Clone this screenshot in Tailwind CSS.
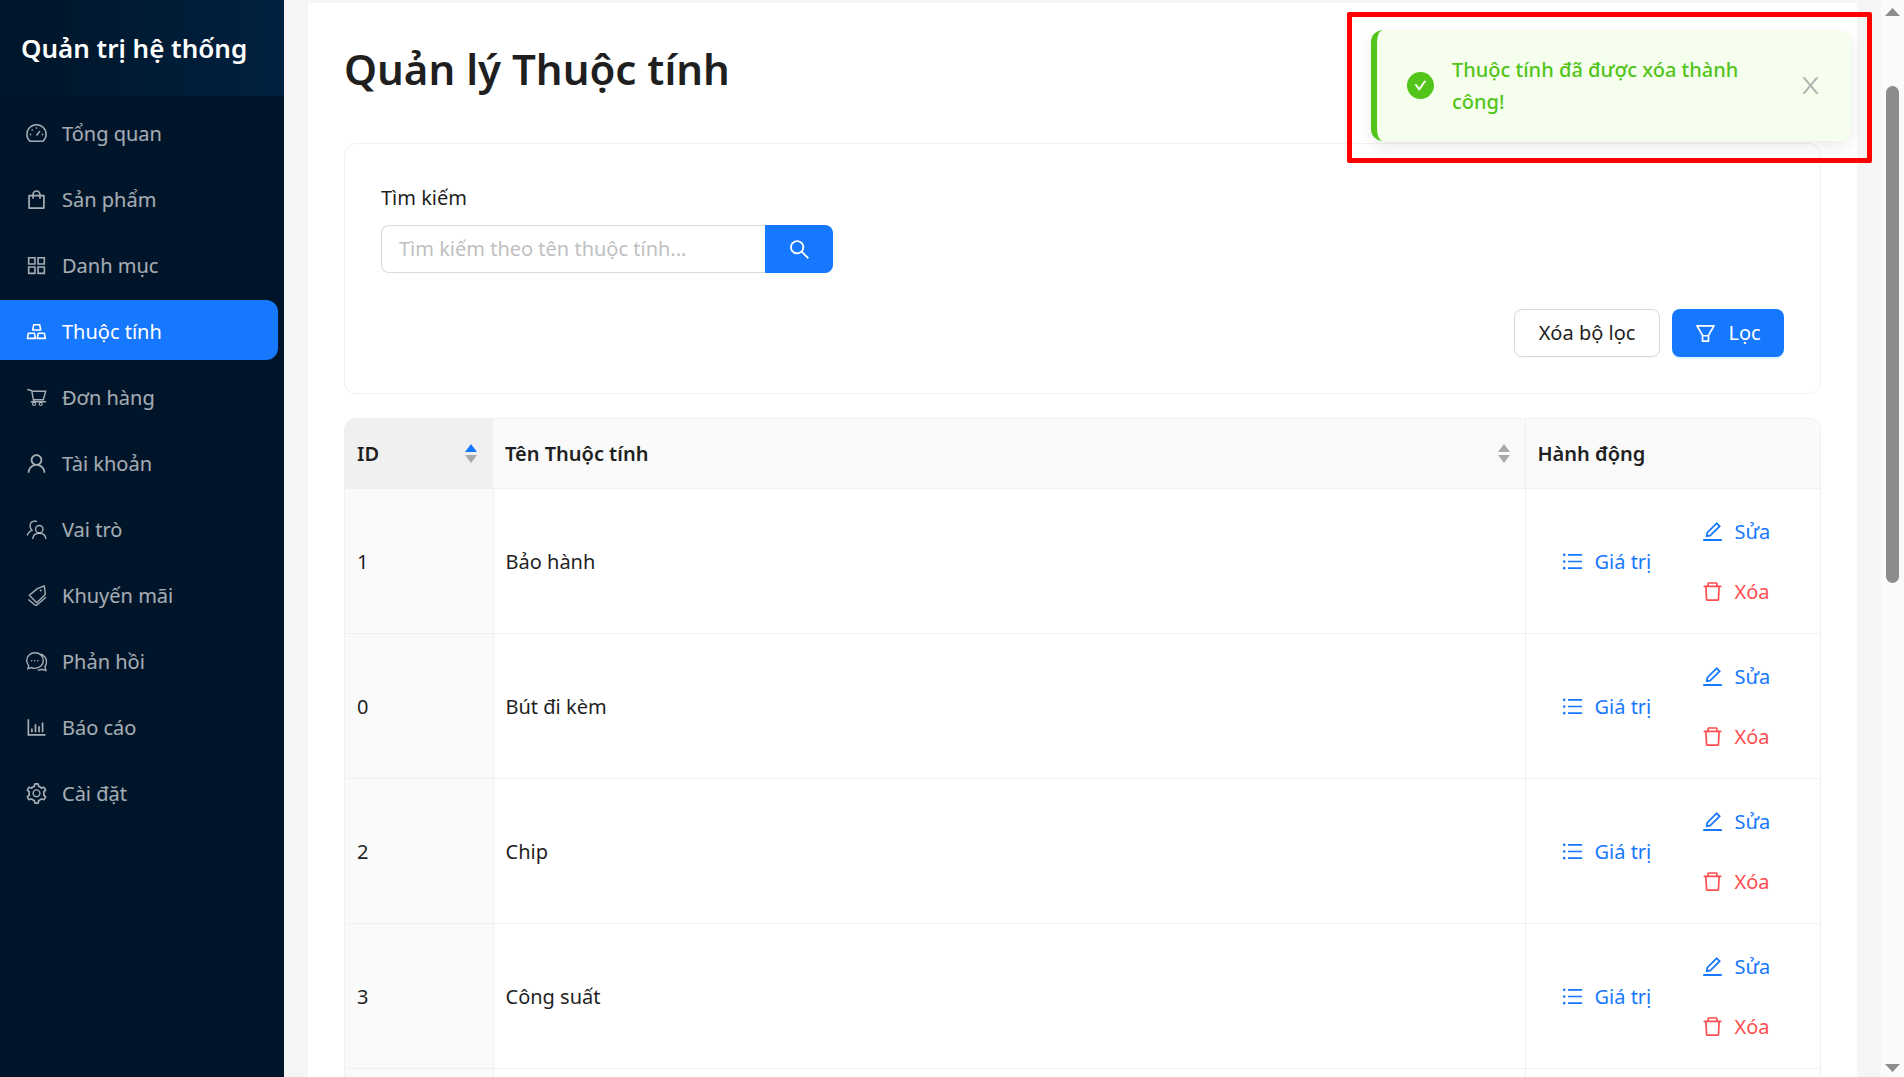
<!DOCTYPE html>
<html lang="en">
  <head>
    <meta charset="UTF-8" />
    <meta name="viewport" content="width=device-width, initial-scale=1.0" />
    <title>Quản lý Thuộc tính</title>
    <script src="https://cdn.jsdelivr.net/npm/@tailwindcss/browser@4"></script>
  </head>
  <body class="font-['Noto_Sans',sans-serif] text-[20px] text-[#1f1f1f] overflow-hidden">
    <svg class="hidden">
      <symbol id="i-dash" viewBox="0 0 21 21"><path d="M4 18.300a9.600 9.600 0 1 1 13 0z" fill="none" stroke="currentColor" stroke-width="1.500" stroke-linejoin="round"/><path d="M10.500 12.500l3.500-4.500M3.800 11.500h1.500M15.700 11.500h1.500M10.500 4.200v1.500M5.700 6.400l1 1" fill="none" stroke="currentColor" stroke-width="1.400"/></symbol>
      <symbol id="i-bag" viewBox="64 64 896 896"><path fill="currentColor" d="M832 312H696v-16c0-101.6-82.4-184-184-184s-184 82.4-184 184v16H192c-17.7 0-32 14.3-32 32v536c0 17.7 14.3 32 32 32h640c17.7 0 32-14.3 32-32V344c0-17.7-14.3-32-32-32zm-432-16c0-61.9 50.1-112 112-112s112 50.1 112 112v16H400v-16zm392 544H232V384h96v88c0 4.4 3.6 8 8 8h56c4.4 0 8-3.6 8-8v-88h224v88c0 4.4 3.6 8 8 8h56c4.4 0 8-3.6 8-8v-88h96v456z"/></symbol>
      <symbol id="i-app" viewBox="64 64 896 896"><path fill="currentColor" d="M464 144H160c-8.8 0-16 7.2-16 16v304c0 8.8 7.2 16 16 16h304c8.8 0 16-7.2 16-16V160c0-8.8-7.2-16-16-16zm-52 268H212V212h200v200zm452-268H560c-8.8 0-16 7.2-16 16v304c0 8.8 7.2 16 16 16h304c8.8 0 16-7.2 16-16V160c0-8.8-7.2-16-16-16zm-52 268H612V212h200v200zM464 544H160c-8.8 0-16 7.2-16 16v304c0 8.8 7.2 16 16 16h304c8.8 0 16-7.2 16-16V560c0-8.8-7.2-16-16-16zm-52 268H212V612h200v200zm452-268H560c-8.8 0-16 7.2-16 16v304c0 8.8 7.2 16 16 16h304c8.8 0 16-7.2 16-16V560c0-8.8-7.2-16-16-16zm-52 268H612V612h200v200z"/></symbol>
      <symbol id="i-gold" viewBox="0 0 21 21"><path d="M7.700 3.800h6l1 5.200h-8zM2.400 12.200h6l1 5.200h-8zM12.300 12.200h6l1 5.200h-8z" fill="none" stroke="currentColor" stroke-width="1.600" stroke-linejoin="round"/></symbol>
      <symbol id="i-cart" viewBox="0 0 21 21"><path d="M1.300 2.500l4.400 1 2.100 11.300M6 4.200h13.700l-2.400 8.600H6.800M4.700 14.800H20" fill="none" stroke="currentColor" stroke-width="1.400"/><circle cx="8" cy="17" r="1.500" fill="none" stroke="currentColor" stroke-width="1.200"/><circle cx="14.700" cy="17" r="1.500" fill="none" stroke="currentColor" stroke-width="1.200"/></symbol>
      <symbol id="i-user" viewBox="64 64 896 896"><path fill="currentColor" d="M858.5 763.6a374 374 0 00-80.6-119.5 375.63 375.63 0 00-119.5-80.6c-.4-.2-.8-.3-1.2-.5C719.5 518 760 444.7 760 362c0-137-111-248-248-248S264 225 264 362c0 82.7 40.5 156 102.8 201.1-.4.2-.8.3-1.2.5-44.8 18.9-85 46-119.5 80.6a375.63 375.63 0 00-80.6 119.5A371.7 371.7 0 00136 901.8a8 8 0 008 8.2h60c4.4 0 7.9-3.5 8-7.8 2-77.2 33-149.5 87.8-204.3 56.7-56.7 132-87.9 212.2-87.9s155.5 31.2 212.2 87.9C779 752.7 810 825 812 902.2c.1 4.4 3.6 7.8 8 7.8h60a8 8 0 008-8.2c-1-47.8-10.9-94.3-29.5-138.2zM512 534c-45.9 0-89.1-17.9-121.6-50.4S340 407.9 340 362c0-45.9 17.9-89.1 50.4-121.6S466.1 190 512 190s89.1 17.9 121.6 50.4S684 316.1 684 362c0 45.9-17.9 89.1-50.4 121.6S557.9 534 512 534z"/></symbol>
      <symbol id="i-team" viewBox="0 0 21 21"><circle cx="13.300" cy="10.200" r="3.700" fill="none" stroke="currentColor" stroke-width="1.400"/><path d="M6.700 20c.3-3.800 3-5.800 6.600-5.800s6.300 2 6.700 5.800M10.900 2.800C9.800 1.800 6.700 1.600 5 3.700c-1.600 2.100-1 5.600.900 7.600C3.300 12.400 1.700 14.300 1.300 16.500" fill="none" stroke="currentColor" stroke-width="1.400"/></symbol>
      <symbol id="i-tags" viewBox="0 0 21 21"><path d="M11.300 3.600l7-2.800 1 8.700-8.600 8.300-7.400-7.600z" fill="none" stroke="currentColor" stroke-width="1.400" stroke-linejoin="round"/><path d="M2.300 14.500l7.700 6.300 10-8.600" fill="none" stroke="currentColor" stroke-width="1.400"/><circle cx="14.700" cy="5.500" r="1" fill="currentColor"/></symbol>
      <symbol id="i-chat" viewBox="0 0 21 21"><path d="M9 1.700C4.300 1.700.700 5.200.700 9.500c0 2 .8 3.700 2 5.100l-.8 3.100 3.700-1.100c1 .5 2.200.8 3.400.8 4.700 0 8.300-3.500 8.300-7.900S13.700 1.700 9 1.700z" fill="none" stroke="currentColor" stroke-width="1.400"/><path d="M14.700 2.800c3.700 1.700 6 5 5.800 8.500-.1 1.800-.7 3.200-1.600 4.200l1 4-4.300-1.200c-1.200.6-2.800.8-3.800.5" fill="none" stroke="currentColor" stroke-width="1.400"/><circle cx="5.700" cy="9.800" r=".8" fill="currentColor"/><circle cx="8.700" cy="9.800" r=".8" fill="currentColor"/><circle cx="11.700" cy="9.800" r=".8" fill="currentColor"/></symbol>
      <symbol id="i-bar" viewBox="64 64 896 896"><path fill="currentColor" d="M888 792H200V168c0-4.400-3.600-8-8-8h-56c-4.400 0-8 3.600-8 8v688c0 4.400 3.600 8 8 8h752c4.400 0 8-3.600 8-8v-56c0-4.400-3.600-8-8-8zm-600-80h56c4.400 0 8-3.600 8-8V560c0-4.400-3.600-8-8-8h-56c-4.400 0-8 3.600-8 8v144c0 4.400 3.600 8 8 8zm152 0h56c4.400 0 8-3.600 8-8V384c0-4.400-3.600-8-8-8h-56c-4.400 0-8 3.600-8 8v320c0 4.400 3.600 8 8 8zm152 0h56c4.400 0 8-3.600 8-8V462c0-4.400-3.600-8-8-8h-56c-4.400 0-8 3.600-8 8v242c0 4.400 3.600 8 8 8zm152 0h56c4.400 0 8-3.600 8-8V304c0-4.400-3.600-8-8-8h-56c-4.400 0-8 3.600-8 8v400c0 4.400 3.600 8 8 8z"/></symbol>
      <symbol id="i-gear" viewBox="64 64 896 896"><path fill="currentColor" d="M924.8 625.7l-65.5-56c3.1-19 4.7-38.4 4.7-57.8s-1.6-38.8-4.7-57.8l65.5-56a32.03 32.03 0 009.3-35.2l-.9-2.6a443.74 443.74 0 00-79.7-137.9l-1.8-2.1a32.12 32.12 0 00-35.1-9.5l-81.3 28.9c-30-24.6-63.5-44-99.7-57.6l-15.7-85a32.05 32.05 0 00-25.8-25.7l-2.7-.5c-52.1-9.4-106.9-9.4-159 0l-2.7.5a32.05 32.05 0 00-25.8 25.7l-15.8 85.4a351.86 351.86 0 00-99 57.4l-81.9-29.1a32 32 0 00-35.1 9.5l-1.8 2.1a446.02 446.02 0 00-79.7 137.9l-.9 2.6c-4.5 12.5-.8 26.5 9.3 35.2l66.3 56.6c-3.1 18.8-4.6 38-4.6 57.1 0 19.2 1.5 38.4 4.6 57.1L99 625.5a32.03 32.03 0 00-9.3 35.2l.9 2.6c18.1 50.4 44.9 96.9 79.7 137.9l1.8 2.1a32.12 32.12 0 0035.1 9.5l81.9-29.1c29.8 24.5 63.1 43.9 99 57.4l15.8 85.4a32.05 32.05 0 0025.8 25.7l2.7.5a449.4 449.4 0 00159 0l2.7-.5a32.05 32.05 0 0025.8-25.7l15.7-85a350 350 0 0099.7-57.6l81.3 28.9a32 32 0 0035.1-9.5l1.8-2.1c34.8-41.1 61.6-87.5 79.7-137.9l.9-2.6c4.5-12.3.8-26.3-9.3-35zM788.3 465.9c2.5 15.1 3.8 30.6 3.8 46.1s-1.3 31-3.8 46.1l-6.6 40.1 74.7 63.9a370.03 370.03 0 01-42.6 73.6L721 702.8l-31.4 25.8c-23.9 19.6-50.5 35-79.3 45.8l-38.1 14.3-17.9 97a377.5 377.5 0 01-85 0l-17.9-97.2-37.8-14.5c-28.5-10.8-55-26.2-78.7-45.7l-31.4-25.9-93.4 33.2c-17-22.9-31.2-47.6-42.6-73.6l75.5-64.5-6.5-40c-2.4-14.9-3.7-30.3-3.7-45.5 0-15.3 1.2-30.6 3.7-45.5l6.5-40-75.5-64.5c11.3-26.1 25.6-50.7 42.6-73.6l93.4 33.2 31.4-25.9c23.7-19.5 50.2-34.9 78.7-45.7l37.9-14.3 17.9-97.2c28.1-3.2 56.8-3.2 85 0l17.9 97 38.1 14.3c28.7 10.8 55.4 26.2 79.3 45.8l31.4 25.8 92.8-32.9c17 22.9 31.2 47.6 42.6 73.6L781.8 426l6.5 39.9zM512 326c-97.2 0-176 78.8-176 176s78.8 176 176 176 176-78.8 176-176-78.8-176-176-176zm83.1 259.1A117.68 117.68 0 01512 619.5c-31.4 0-60.9-12.3-83.1-34.4A117.68 117.68 0 01394.5 502c0-31.4 12.3-60.9 34.4-83.1 22.2-22.2 51.7-34.4 83.1-34.4 31.4 0 60.9 12.2 83.1 34.4A117.68 117.68 0 01629.5 502c0 31.4-12.3 60.9-34.4 83.1z"/></symbol>
      <symbol id="i-list" viewBox="64 64 896 896"><path fill="currentColor" d="M912 192H328c-4.4 0-8 3.6-8 8v56c0 4.4 3.6 8 8 8h584c4.4 0 8-3.6 8-8v-56c0-4.4-3.6-8-8-8zm0 284H328c-4.4 0-8 3.6-8 8v56c0 4.4 3.6 8 8 8h584c4.4 0 8-3.6 8-8v-56c0-4.4-3.6-8-8-8zm0 284H328c-4.4 0-8 3.6-8 8v56c0 4.4 3.6 8 8 8h584c4.4 0 8-3.6 8-8v-56c0-4.4-3.6-8-8-8zM104 228a56 56 0 10112 0 56 56 0 10-112 0zm0 284a56 56 0 10112 0 56 56 0 10-112 0zm0 284a56 56 0 10112 0 56 56 0 10-112 0z"/></symbol>
      <symbol id="i-edit" viewBox="64 64 896 896"><path fill="currentColor" d="M257.7 752c2 0 4-.2 6-.5L431.9 722c2-.4 3.9-1.3 5.3-2.8l423.9-423.9a9.96 9.96 0 000-14.1L694.9 114.9c-1.9-1.9-4.4-2.9-7.1-2.9s-5.2 1-7.1 2.9L256.8 538.8c-1.5 1.5-2.4 3.3-2.8 5.3l-29.5 168.2a33.5 33.5 0 009.4 29.8c6.6 6.4 14.9 9.9 23.8 9.9zm67.4-174.4L687.8 215l73.3 73.3-362.7 362.6-88.9 15.7 15.6-89zM880 836H144c-17.7 0-32 14.3-32 32v36c0 4.4 3.6 8 8 8h784c4.4 0 8-3.6 8-8v-36c0-17.7-14.3-32-32-32z"/></symbol>
      <symbol id="i-del" viewBox="64 64 896 896"><path fill="currentColor" d="M360 184h-8c4.4 0 8-3.6 8-8v8h304v-8c0 4.4 3.6 8 8 8h-8v72h72v-80c0-35.3-28.7-64-64-64H352c-35.3 0-64 28.7-64 64v80h72v-72zm504 72H160c-17.7 0-32 14.3-32 32v32c0 4.4 3.6 8 8 8h60.4l24.7 523c1.6 34.1 29.8 61 63.9 61h454c34.2 0 62.3-26.8 63.9-61l24.7-523H888c4.4 0 8-3.6 8-8v-32c0-17.7-14.3-32-32-32zM731.3 840H292.7l-24.2-512h487l-24.2 512z"/></symbol>
    </svg>

    <div class="relative flex h-screen w-screen overflow-hidden">
      <!-- sidebar -->
      <aside class="flex flex-col w-[284px] shrink-0 bg-[#001529]">
        <div class="flex items-center h-[96px] pl-[21px] bg-gradient-to-r from-[#001529] to-[#002140]">
          <h1 class="text-[26px] font-semibold text-white whitespace-nowrap">Quản trị hệ thống</h1>
        </div>
        <nav class="flex flex-col gap-[6px] pt-[6px] w-[278px] text-white/65">
          <a class="flex items-center gap-[15px] h-[60px] pt-[3px] pl-[26px] rounded-r-lg"><svg class="w-[21px] h-[21px]"><use href="#i-dash"/></svg>Tổng quan</a>
          <a class="flex items-center gap-[15px] h-[60px] pt-[3px] pl-[26px] rounded-r-lg"><svg class="w-[21px] h-[21px]"><use href="#i-bag"/></svg>Sản phẩm</a>
          <a class="flex items-center gap-[15px] h-[60px] pt-[3px] pl-[26px] rounded-r-lg"><svg class="w-[21px] h-[21px]"><use href="#i-app"/></svg>Danh mục</a>
          <a class="flex items-center gap-[15px] h-[60px] pt-[3px] pl-[26px] rounded-r-xl bg-[#1677ff] text-white"><svg class="w-[21px] h-[21px]"><use href="#i-gold"/></svg>Thuộc tính</a>
          <a class="flex items-center gap-[15px] h-[60px] pt-[3px] pl-[26px] rounded-r-lg"><svg class="w-[21px] h-[21px]"><use href="#i-cart"/></svg>Đơn hàng</a>
          <a class="flex items-center gap-[15px] h-[60px] pt-[3px] pl-[26px] rounded-r-lg"><svg class="w-[21px] h-[21px]"><use href="#i-user"/></svg>Tài khoản</a>
          <a class="flex items-center gap-[15px] h-[60px] pt-[3px] pl-[26px] rounded-r-lg"><svg class="w-[21px] h-[21px]"><use href="#i-team"/></svg>Vai trò</a>
          <a class="flex items-center gap-[15px] h-[60px] pt-[3px] pl-[26px] rounded-r-lg"><svg class="w-[21px] h-[21px]"><use href="#i-tags"/></svg>Khuyến mãi</a>
          <a class="flex items-center gap-[15px] h-[60px] pt-[3px] pl-[26px] rounded-r-lg"><svg class="w-[21px] h-[21px]"><use href="#i-chat"/></svg>Phản hồi</a>
          <a class="flex items-center gap-[15px] h-[60px] pt-[3px] pl-[26px] rounded-r-lg"><svg class="w-[21px] h-[21px]"><use href="#i-bar"/></svg>Báo cáo</a>
          <a class="flex items-center gap-[15px] h-[60px] pt-[3px] pl-[26px] rounded-r-lg"><svg class="w-[21px] h-[21px]"><use href="#i-gear"/></svg>Cài đặt</a>
        </nav>
      </aside>

      <!-- content -->
      <main class="flex-1 min-w-0 bg-[#f5f5f5] px-[24px] pt-[3px]">
        <div class="bg-white h-full pl-[36px] pr-[36px]">
          <h2 class="h-[140px] pt-[36px] text-[42px] leading-[60px] font-semibold">Quản lý Thuộc tính</h2>

          <section class="h-[251px] border border-[#f0f0f0] rounded-[12px] pt-[36px] px-[36px]">
            <label class="block h-[45px] leading-[36px]">Tìm kiếm</label>
            <div class="flex w-[452px] h-[48px]">
              <input class="flex-1 min-w-0 px-[17px] border border-[#d9d9d9] border-r-0 rounded-l-lg placeholder:text-[#bfbfbf]" placeholder="Tìm kiếm theo tên thuộc tính..." />
              <button class="flex items-center justify-center w-[68px] bg-[#1677ff] text-white rounded-r-lg">
                <svg class="w-[21px] h-[21px]" viewBox="64 64 896 896" fill="currentColor"><path d="M909.6 854.5L649.9 594.8C690.2 542.7 712 479 712 412c0-80.2-31.3-155.4-87.9-212.1-56.6-56.7-132-87.9-212.1-87.9s-155.5 31.3-212.1 87.9C143.2 256.5 112 331.8 112 412c0 80.1 31.3 155.5 87.9 212.1C256.5 680.8 331.8 712 412 712c67 0 130.6-21.8 182.7-62l259.7 259.6a8.2 8.2 0 0011.6 0l43.6-43.5a8.2 8.2 0 000-11.6zM570.4 570.4C528 612.7 471.8 636 412 636s-116-23.3-158.4-65.6C211.3 528 188 471.800 188 412s23.3-116.1 65.6-158.4C296 211.3 352.2 188 412 188s116.1 23.2 158.4 65.6S636 352.2 636 412s-23.3 116.1-65.6 158.4z"/></svg>
              </button>
            </div>
            <div class="flex justify-end gap-[12px] mt-[36px]">
              <button class="w-[146px] h-[48px] border border-[#d9d9d9] rounded-lg shadow-[0_2px_0_rgba(0,0,0,0.02)]">Xóa bộ lọc</button>
              <button class="flex items-center justify-center gap-[12px] w-[112px] h-[48px] bg-[#1677ff] text-white rounded-lg shadow-[0_2px_0_rgba(5,145,255,0.1)]">
                <svg class="w-[21px] h-[21px]" viewBox="64 64 896 896" fill="currentColor"><path d="M880.1 154H143.9c-24.5 0-39.8 26.7-27.5 48L349 597.4V838c0 17.7 14.2 32 31.8 32h262.4c17.6 0 31.8-14.3 31.8-32V597.4L907.7 202c12.2-21.3-3.1-48-27.6-48zM603.4 798H420.6V642h182.9v156zm9.6-236.6l-9.5 16.6h-183l-9.5-16.6L212.7 226h598.6L613 561.4z"/></svg>
                Lọc
              </button>
            </div>
          </section>

          <div class="mt-[24px] border-x border-t border-[#f0f0f0] rounded-t-[12px] overflow-hidden">
            <table class="w-full table-fixed text-left [&_td]:pt-[2px] [&_th]:pt-[2px]">
              <colgroup><col class="w-[148px]" /><col /><col class="w-[295px]" /></colgroup>
              <thead>
                <tr class="h-[69px]">
                  <th class="relative px-[12px] font-semibold bg-[#f0f0f0] border-b border-[#f0f0f0]">ID
                    <span class="absolute right-[15px] top-[24px] flex flex-col gap-[1px]"><svg class="w-[14px] h-[10px] text-[#1677ff]" viewBox="0 0 14 10"><path d="M7 1l6 8H1z" fill="currentColor"/></svg><svg class="w-[14px] h-[10px] text-[#aaaaaa]" viewBox="0 0 14 10"><path d="M7 9l6-8H1z" fill="currentColor"/></svg></span>
                  </th>
                  <th class="relative px-[12px] font-semibold bg-[#fafafa] border-b border-r border-[#f0f0f0]">Tên Thuộc tính
                    <span class="absolute right-[14px] top-[24px] flex flex-col gap-[1px] text-[#aaaaaa]"><svg class="w-[14px] h-[10px]" viewBox="0 0 14 10"><path d="M7 1l6 8H1z" fill="currentColor"/></svg><svg class="w-[14px] h-[10px]" viewBox="0 0 14 10"><path d="M7 9l6-8H1z" fill="currentColor"/></svg></span>
                  </th>
                  <th class="px-[12px] font-semibold bg-[#fafafa] border-b border-[#f0f0f0]">Hành động</th>
                </tr>
              </thead>
              <tbody>
                <tr class="h-[145px]">
                  <td class="px-[12px] bg-[#fafafa] border-b border-r border-[#f0f0f0]">1</td>
                  <td class="px-[12px] border-b border-r border-[#f0f0f0]">Bảo hành</td>
                  <td class="pl-[36px] border-b border-[#f0f0f0]">
                    <div class="flex items-center text-[#1677ff]">
                      <a class="flex items-center gap-[12px] w-[140px]"><svg class="w-[21px] h-[21px]"><use href="#i-list"/></svg>Giá trị</a>
                      <div class="flex flex-col gap-[12px]">
                        <a class="flex items-center gap-[12px] h-[48px]"><svg class="w-[21px] h-[21px]"><use href="#i-edit"/></svg>Sửa</a>
                        <a class="flex items-center gap-[12px] h-[48px] text-[#ff4d4f]"><svg class="w-[21px] h-[21px]"><use href="#i-del"/></svg>Xóa</a>
                      </div>
                    </div>
                  </td>
                </tr>
                <tr class="h-[145px]">
                  <td class="px-[12px] bg-[#fafafa] border-b border-r border-[#f0f0f0]">0</td>
                  <td class="px-[12px] border-b border-r border-[#f0f0f0]">Bút đi kèm</td>
                  <td class="pl-[36px] border-b border-[#f0f0f0]">
                    <div class="flex items-center text-[#1677ff]">
                      <a class="flex items-center gap-[12px] w-[140px]"><svg class="w-[21px] h-[21px]"><use href="#i-list"/></svg>Giá trị</a>
                      <div class="flex flex-col gap-[12px]">
                        <a class="flex items-center gap-[12px] h-[48px]"><svg class="w-[21px] h-[21px]"><use href="#i-edit"/></svg>Sửa</a>
                        <a class="flex items-center gap-[12px] h-[48px] text-[#ff4d4f]"><svg class="w-[21px] h-[21px]"><use href="#i-del"/></svg>Xóa</a>
                      </div>
                    </div>
                  </td>
                </tr>
                <tr class="h-[145px]">
                  <td class="px-[12px] bg-[#fafafa] border-b border-r border-[#f0f0f0]">2</td>
                  <td class="px-[12px] border-b border-r border-[#f0f0f0]">Chip</td>
                  <td class="pl-[36px] border-b border-[#f0f0f0]">
                    <div class="flex items-center text-[#1677ff]">
                      <a class="flex items-center gap-[12px] w-[140px]"><svg class="w-[21px] h-[21px]"><use href="#i-list"/></svg>Giá trị</a>
                      <div class="flex flex-col gap-[12px]">
                        <a class="flex items-center gap-[12px] h-[48px]"><svg class="w-[21px] h-[21px]"><use href="#i-edit"/></svg>Sửa</a>
                        <a class="flex items-center gap-[12px] h-[48px] text-[#ff4d4f]"><svg class="w-[21px] h-[21px]"><use href="#i-del"/></svg>Xóa</a>
                      </div>
                    </div>
                  </td>
                </tr>
                <tr class="h-[145px]">
                  <td class="px-[12px] bg-[#fafafa] border-b border-r border-[#f0f0f0]">3</td>
                  <td class="px-[12px] border-b border-r border-[#f0f0f0]">Công suất</td>
                  <td class="pl-[36px] border-b border-[#f0f0f0]">
                    <div class="flex items-center text-[#1677ff]">
                      <a class="flex items-center gap-[12px] w-[140px]"><svg class="w-[21px] h-[21px]"><use href="#i-list"/></svg>Giá trị</a>
                      <div class="flex flex-col gap-[12px]">
                        <a class="flex items-center gap-[12px] h-[48px]"><svg class="w-[21px] h-[21px]"><use href="#i-edit"/></svg>Sửa</a>
                        <a class="flex items-center gap-[12px] h-[48px] text-[#ff4d4f]"><svg class="w-[21px] h-[21px]"><use href="#i-del"/></svg>Xóa</a>
                      </div>
                    </div>
                  </td>
                </tr>
                <tr class="h-[145px]">
                  <td class="bg-[#fafafa] border-r border-[#f0f0f0]"></td>
                  <td class="border-r border-[#f0f0f0]"></td>
                  <td></td>
                </tr>
              </tbody>
            </table>
          </div>
        </div>
      </main>

      <!-- browser scrollbar -->
      <div class="flex flex-col items-center justify-between w-[23px] shrink-0 bg-[#fafafa] pt-[8px] pb-[5px]">
        <div class="flex flex-col items-center">
          <svg class="w-[15px] h-[8px] text-[#8c8c8c]" viewBox="0 0 15 8"><path d="M7.500 0l7.500 8H0z" fill="currentColor"/></svg>
          <div class="w-[13px] h-[497px] mt-[70px] rounded-full bg-[#8c8c8c]"></div>
        </div>
        <svg class="w-[15px] h-[8px] text-[#8c8c8c]" viewBox="0 0 15 8"><path d="M7.500 8l7.500-8H0z" fill="currentColor"/></svg>
      </div>

      <!-- toast with the red annotation box round it -->
      <div class="absolute left-[1371px] top-[30px] flex items-center w-[480px] h-[111px] pl-[30px] pr-[29px] bg-[#f6ffed] border-l-[6px] border-[#52c41a] rounded-[12px] shadow-[0_6px_16px_rgba(0,0,0,0.08)]">
        <svg class="w-[27px] h-[27px] shrink-0 text-[#52c41a]" viewBox="64 64 896 896" fill="currentColor"><path d="M512 64C264.6 64 64 264.6 64 512s200.6 448 448 448 448-200.6 448-448S759.4 64 512 64zm193.5 301.7l-210.6 292a31.8 31.8 0 01-51.7 0L318.5 484.9c-3.8-5.3 0-12.7 6.5-12.7h46.9c10.2 0 19.9 4.9 25.9 13.3l71.2 98.8 157.2-218c6-8.3 15.6-13.3 25.9-13.3H699c6.5 0 10.3 7.4 6.5 12.7z"/></svg>
        <p class="w-[305px] ml-[18px] mt-[1px] font-medium text-[#52c41a] leading-[32px]">Thuộc tính đã được xóa thành công!</p>
        <svg class="w-[23px] h-[23px] ml-auto text-[#b3b3b3]" viewBox="64 64 896 896" fill="currentColor"><path d="M563.8 512l262.5-312.9c4.4-5.2.7-13.1-6.1-13.1h-79.8c-4.7 0-9.2 2.1-12.3 5.7L511.6 449.8 295.1 191.7c-3-3.6-7.5-5.7-12.3-5.7H203c-6.8 0-10.5 7.9-6.1 13.1L459.4 512 196.9 824.9A7.95 7.95 0 00203 838h79.8c4.7 0 9.2-2.1 12.3-5.7l216.5-258.1 216.5 258.1c3 3.6 7.5 5.7 12.3 5.7h79.8c6.8 0 10.5-7.9 6.1-13.1L563.8 512z"/></svg>
      </div>
      <div class="absolute left-[1347px] top-[12px] w-[525px] h-[151px] border-[5px] border-[#ff0000] rounded-[2px] pointer-events-none"></div>
    </div>
  </body>
</html>
